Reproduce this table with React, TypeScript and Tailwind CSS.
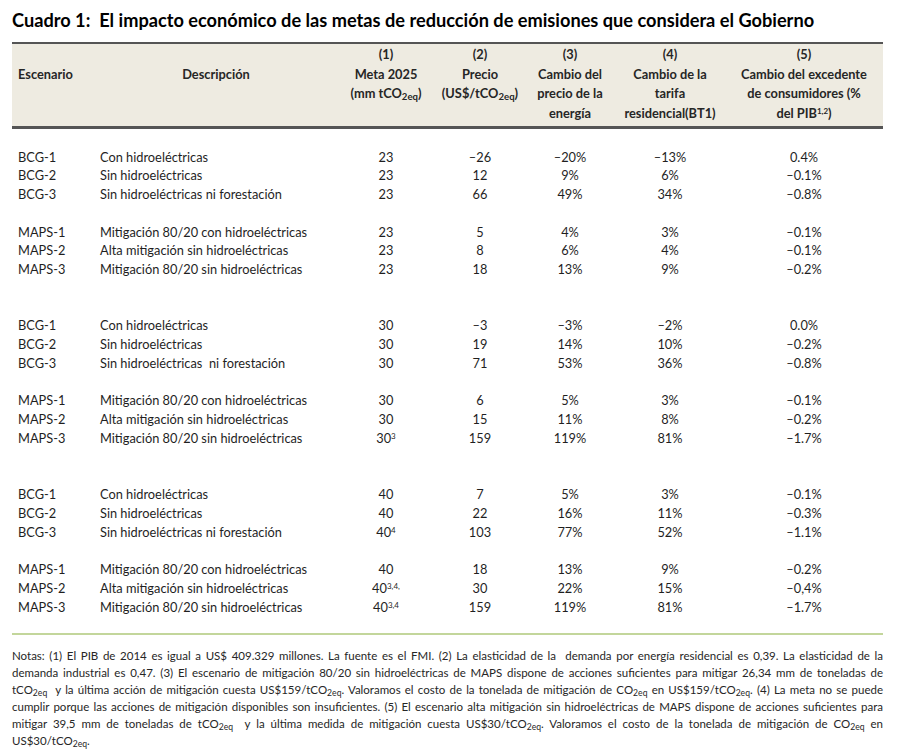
import type { ReactNode } from "react";

type Row = {
  id: string;
  desc: string;
  meta: ReactNode;
  precio: string;
  energia: string;
  tarifa: string;
  excedente: string;
};

const CO2 = () => (
  <>
    tCO<sub>2eq</sub>
  </>
);

const groups: Row[][][] = [
  [
    [
      { id: "BCG-1", desc: "Con hidroeléctricas", meta: "23", precio: "–26", energia: "–20%", tarifa: "–13%", excedente: "0.4%" },
      { id: "BCG-2", desc: "Sin hidroeléctricas", meta: "23", precio: "12", energia: "9%", tarifa: "6%", excedente: "–0.1%" },
      { id: "BCG-3", desc: "Sin hidroeléctricas ni forestación", meta: "23", precio: "66", energia: "49%", tarifa: "34%", excedente: "–0.8%" },
    ],
    [
      { id: "MAPS-1", desc: "Mitigación 80/20 con hidroeléctricas", meta: "23", precio: "5", energia: "4%", tarifa: "3%", excedente: "–0.1%" },
      { id: "MAPS-2", desc: "Alta mitigación sin hidroeléctricas", meta: "23", precio: "8", energia: "6%", tarifa: "4%", excedente: "–0.1%" },
      { id: "MAPS-3", desc: "Mitigación 80/20 sin hidroeléctricas", meta: "23", precio: "18", energia: "13%", tarifa: "9%", excedente: "–0.2%" },
    ],
  ],
  [
    [
      { id: "BCG-1", desc: "Con hidroeléctricas", meta: "30", precio: "–3", energia: "–3%", tarifa: "–2%", excedente: "0.0%" },
      { id: "BCG-2", desc: "Sin hidroeléctricas", meta: "30", precio: "19", energia: "14%", tarifa: "10%", excedente: "–0.2%" },
      { id: "BCG-3", desc: "Sin hidroeléctricas  ni forestación", meta: "30", precio: "71", energia: "53%", tarifa: "36%", excedente: "–0.8%" },
    ],
    [
      { id: "MAPS-1", desc: "Mitigación 80/20 con hidroeléctricas", meta: "30", precio: "6", energia: "5%", tarifa: "3%", excedente: "–0.1%" },
      { id: "MAPS-2", desc: "Alta mitigación sin hidroeléctricas", meta: "30", precio: "15", energia: "11%", tarifa: "8%", excedente: "–0.2%" },
      { id: "MAPS-3", desc: "Mitigación 80/20 sin hidroeléctricas", meta: <>30<sup className="text-[8px]">3</sup></>, precio: "159", energia: "119%", tarifa: "81%", excedente: "–1.7%" },
    ],
  ],
  [
    [
      { id: "BCG-1", desc: "Con hidroeléctricas", meta: "40", precio: "7", energia: "5%", tarifa: "3%", excedente: "–0.1%" },
      { id: "BCG-2", desc: "Sin hidroeléctricas", meta: "40", precio: "22", energia: "16%", tarifa: "11%", excedente: "–0.3%" },
      { id: "BCG-3", desc: "Sin hidroeléctricas ni forestación", meta: <>40<sup className="text-[8px]">4</sup></>, precio: "103", energia: "77%", tarifa: "52%", excedente: "–1.1%" },
    ],
    [
      { id: "MAPS-1", desc: "Mitigación 80/20 con hidroeléctricas", meta: "40", precio: "18", energia: "13%", tarifa: "9%", excedente: "–0.2%" },
      { id: "MAPS-2", desc: "Alta mitigación sin hidroeléctricas", meta: <>40<sup className="text-[8px]">3,4,</sup></>, precio: "30", energia: "22%", tarifa: "15%", excedente: "–0,4%" },
      { id: "MAPS-3", desc: "Mitigación 80/20 sin hidroeléctricas", meta: <>40<sup className="text-[8px]">3,4</sup></>, precio: "159", energia: "119%", tarifa: "81%", excedente: "–1.7%" },
    ],
  ],
];

const cols = "grid grid-cols-[83px_242px_98px_90px_90px_110px_158px]";

function DataRow({ r }: { r: Row }) {
  return (
    <div className={`${cols} h-[18.75px] leading-[18.75px] whitespace-pre`}>
      <div className="pl-[6px]">{r.id}</div>
      <div className="pl-[5px]">{r.desc}</div>
      <div className="text-center">{r.meta}</div>
      <div className="text-center">{r.precio}</div>
      <div className="text-center">{r.energia}</div>
      <div className="text-center">{r.tarifa}</div>
      <div className="text-center">{r.excedente}</div>
    </div>
  );
}

const noteLines: ReactNode[] = [
  <>Notas: (1) El PIB de 2014 es igual a US$ 409.329 millones. La fuente es el FMI. (2) La elasticidad de la  demanda por energía residencial es 0,39. La elasticidad de la</>,
  <>demanda industrial es 0,47. (3) El escenario de mitigación 80/20 sin hidroeléctricas de MAPS dispone de acciones suficientes para mitigar 26,34 mm de toneladas de</>,
  <><CO2 />  y la última acción de mitigación cuesta US$159/<CO2 />. Valoramos el costo de la tonelada de mitigación de CO<sub>2eq</sub> en US$159/<CO2 />. (4) La meta no se puede</>,
  <>cumplir porque las acciones de mitigación disponibles son insuficientes. (5) El escenario alta mitigación sin hidroeléctricas de MAPS dispone de acciones suficientes para</>,
  <>mitigar 39,5 mm de toneladas de <CO2 />  y la última medida de mitigación cuesta US$30/<CO2 />. Valoramos el costo de la tonelada de mitigación de CO<sub>2eq</sub> en</>,
];

export default function App() {
  return (
    <div className="h-[755px] w-[900px] overflow-hidden bg-white font-['Lato','Liberation_Sans',sans-serif] text-[#1f1f1f]">
      {/* ── Title ──────────────────────────────────── */}
      <h1 className="pl-3 pt-[10px] text-[18.2px] font-bold leading-5 text-black">
        Cuadro 1:&nbsp; El impacto económico de las metas de reducción de emisiones que considera el Gobierno
      </h1>

      {/* ── Table ──────────────────────────────────── */}
      <div className="ml-3 mt-[12px] w-[871px] text-[12.8px]">
        <div className={`${cols} border-t-2 border-b-[3px] border-[#555555] bg-[#eeebe1] pb-[3px] pt-px font-bold leading-[19.5px] text-[#262626]`}>
          <div className="pl-[6px] pt-[19.5px]">Escenario</div>
          <div className="pt-[19.5px] text-center">Descripción</div>
          <div className="text-center">
            (1)<br />Meta 2025<br />(mm <CO2 />)
          </div>
          <div className="text-center">
            (2)<br />Precio<br />(US$/<CO2 />)
          </div>
          <div className="text-center">
            (3)<br />Cambio del<br />precio de la<br />energía
          </div>
          <div className="text-center">
            (4)<br />Cambio de la<br />tarifa<br />residencial(BT1)
          </div>
          <div className="text-center">
            (5)<br />Cambio del excedente<br />de consumidores (%<br />del PIB<sup className="text-[8px]">1,2</sup>)
          </div>
        </div>

        <div className="flex flex-col gap-[37.5px] pt-[18.5px]">
          {groups.map((g, gi) => (
            <div key={gi} className="flex flex-col gap-[18.75px]">
              {g.map((block, bi) => (
                <div key={bi}>
                  {block.map((r) => (
                    <DataRow key={r.id} r={r} />
                  ))}
                </div>
              ))}
            </div>
          ))}
        </div>

        {/* ── Notes ──────────────────────────────────── */}
        <div className="mt-[17px] h-[2px] bg-[#c3d69b]" />
        <div className="pt-[12px] text-[11.5px] leading-[17px] text-[#262626]">
          {noteLines.map((l, i) => (
            <div key={i} className="whitespace-pre text-justify [text-align-last:justify]">
              {l}
            </div>
          ))}
          <div>
            US$30/<CO2 />.
          </div>
        </div>
      </div>
    </div>
  );
}
